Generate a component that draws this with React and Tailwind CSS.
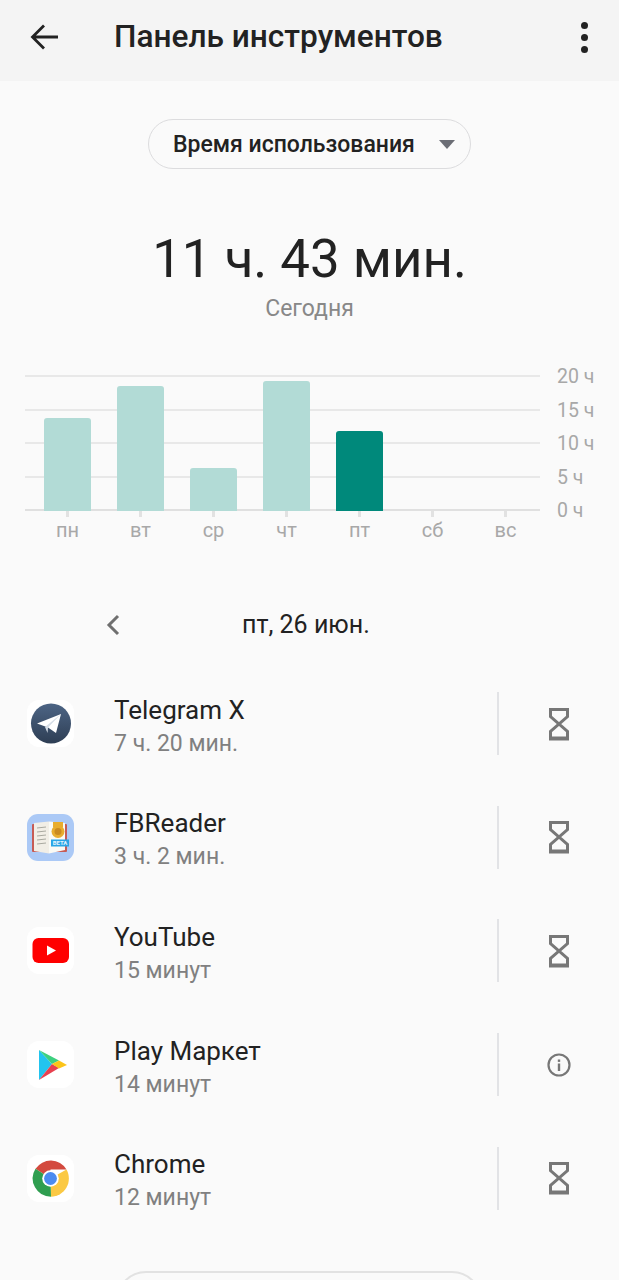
import React from "react";

const bars = [
  { day: "пн", h: 93 },
  { day: "вт", h: 125 },
  { day: "ср", h: 43 },
  { day: "чт", h: 130 },
  { day: "пт", h: 80, active: true },
  { day: "сб", h: 0 },
  { day: "вс", h: 0 },
];

const axis = ["20 ч", "15 ч", "10 ч", "5 ч", "0 ч"];

function Hourglass() {
  return (
    <svg width="22" height="34" viewBox="0 0 22 34" fill="none" stroke="#777" strokeWidth="3">
      <path d="M2.5 2.5H19.5V9.5L2.5 24.5V31.5H19.5V24.5L2.5 9.5Z" strokeLinejoin="miter" />
      <path d="M1 31.5H21" strokeWidth="4" />
    </svg>
  );
}

function InfoIcon() {
  return (
    <svg width="26" height="26" viewBox="0 0 26 26" fill="none">
      <circle cx="13" cy="13" r="10.5" stroke="#777" strokeWidth="2.2" />
      <rect x="11.8" y="11.5" width="2.4" height="7.5" fill="#777" />
      <rect x="11.8" y="7.5" width="2.4" height="2.4" fill="#777" />
    </svg>
  );
}

function TelegramIcon() {
  return (
    <svg width="47" height="47" viewBox="0 0 47 47">
      <defs>
        <linearGradient id="tg" x1="0" y1="0" x2="0" y2="1">
          <stop offset="0" stopColor="#4d6585" />
          <stop offset="1" stopColor="#2e3e54" />
        </linearGradient>
      </defs>
      <rect width="47" height="47" rx="12" fill="#fff" />
      <circle cx="24" cy="23.5" r="20" fill="url(#tg)" />
      <path d="M10 23.5L34 14L29 33L21 27.5Z" fill="#fff" />
      <path d="M18 27L34 14L21 27.5L20.5 33Z" fill="#d5dde6" />
    </svg>
  );
}

function FBReaderIcon() {
  return (
    <svg width="47" height="47" viewBox="0 0 47 47">
      <rect width="47" height="47" rx="11" fill="#abc9f6" />
      <rect x="5" y="10" width="35" height="28" rx="1" fill="#c65b55" />
      <path d="M7 9L22 7.5V39.5L7 37Z" fill="#f1eee6" />
      <path d="M22 7.5L38 9V36L22 39.5Z" fill="#fafaf5" />
      <path d="M10 14L19 13M10 18L19 17M10 22L19 21M10 26L19 25M10 30L19 29" stroke="#a9a9a0" strokeWidth="1" />
      <rect x="26" y="8" width="10" height="5" fill="#e8ad2e" />
      <circle cx="31" cy="17.5" r="6.5" fill="#e8ad2e" />
      <circle cx="31" cy="17.5" r="3.5" fill="#c98a1f" />
      <rect x="24" y="25.5" width="18" height="7" fill="#2aa5e6" />
      <text x="33" y="31.2" textAnchor="middle" fontSize="6" fontWeight="700" fill="#e3f4fd" fontFamily="Roboto, sans-serif">BETA</text>
    </svg>
  );
}

function YouTubeIcon() {
  return (
    <svg width="47" height="47" viewBox="0 0 47 47">
      <rect width="47" height="47" rx="12" fill="#fff" />
      <rect x="5.5" y="11" width="36.5" height="25" rx="6" fill="#f00" />
      <path d="M20 18.5L29 23.5L20 28.5Z" fill="#fff" />
    </svg>
  );
}

function PlayIcon() {
  return (
    <svg width="47" height="47" viewBox="0 0 47 47">
      <rect width="47" height="47" rx="12" fill="#fff" />
      <path d="M12 9L25 23L12 39Z" fill="#22c4ef" />
      <path d="M12 9L32 19.5L25 23Z" fill="#3dd07f" />
      <path d="M12 39L25 23L32 27Z" fill="#e8404f" />
      <path d="M32 19.5L40 24L32 27.5L25 23Z" fill="#fcc419" />
    </svg>
  );
}

function ChromeIcon() {
  return (
    <svg width="47" height="47" viewBox="0 0 47 47">
      <rect width="47" height="47" rx="12" fill="#fff" />
      <path d="M23.5 23.5L8.5 13.8A18.3 18.3 0 0 1 39.5 14.5H23.5Z" fill="#d34a3f" />
      <path d="M23.5 23.5L39.5 14.5A18.3 18.3 0 0 1 24 41.8Z" fill="#fbc944" />
      <path d="M23.5 23.5L24 41.8A18.3 18.3 0 0 1 8.5 13.8Z" fill="#2f9e50" />
      <circle cx="23.5" cy="23.5" r="8.3" fill="#fff" />
      <circle cx="23.5" cy="23.5" r="6.4" fill="#4c8bf0" />
    </svg>
  );
}

const apps = [
  { name: "Telegram X", time: "7 ч. 20 мин.", icon: <TelegramIcon />, action: <Hourglass /> },
  { name: "FBReader", time: "3 ч. 2 мин.", icon: <FBReaderIcon />, action: <Hourglass /> },
  { name: "YouTube", time: "15 минут", icon: <YouTubeIcon />, action: <Hourglass /> },
  { name: "Play Маркет", time: "14 минут", icon: <PlayIcon />, action: <InfoIcon /> },
  { name: "Chrome", time: "12 минут", icon: <ChromeIcon />, action: <Hourglass /> },
];

export default function App() {
  return (
    <div className="h-[1280px] w-[619px] overflow-hidden bg-[#fafafa] font-['Roboto',sans-serif]">
      {/* top bar */}
      <div className="flex h-[81px] items-center bg-[#f4f4f4] pb-[7px]">
        <div className="flex w-[114px] justify-center pr-[26px]">
          <svg width="28" height="28" viewBox="0 0 28 28" fill="none" stroke="#222" strokeWidth="2.8">
            <path d="M28 14H3M14 2.5L2.5 14L14 25.5" />
          </svg>
        </div>
        <div className="flex-1 text-[31.6px] leading-[40px] font-medium text-[#222]">Панель инструментов</div>
        <div className="mr-[31px] flex flex-col gap-[5px]">
          <span className="h-[7px] w-[7px] rounded-full bg-[#222]" />
          <span className="h-[7px] w-[7px] rounded-full bg-[#222]" />
          <span className="h-[7px] w-[7px] rounded-full bg-[#222]" />
        </div>
      </div>

      {/* dropdown */}
      <div className="mt-[38px] flex justify-center">
        <div className="flex h-[50px] w-[323px] items-center rounded-full border border-[#dcdcde] pt-[1px] pl-[24px]">
          <span className="text-[23px] leading-[30px] font-medium text-[#222]">Время использования</span>
          <span className="ml-[24px] h-0 w-0 border-x-[8px] border-t-[9px] border-x-transparent border-t-[#6b6d75]" />
        </div>
      </div>

      {/* total */}
      <div className="mt-[57px] text-center text-[52.8px] leading-[66px] text-[#222]">11 ч. 43 мин.</div>
      <div className="mt-[2px] text-center text-[23px] leading-[30px] text-[#888]">Сегодня</div>

      {/* chart */}
      <div className="mt-[51px] flex">
        <div className="relative ml-[25px] h-[136px] w-[515px]">
          <div className="flex h-full flex-col justify-between">
            <div className="h-[2px] bg-[#e8e8e8]" />
            <div className="h-[2px] bg-[#e8e8e8]" />
            <div className="h-[2px] bg-[#e8e8e8]" />
            <div className="h-[2px] bg-[#e8e8e8]" />
            <div className="h-[2px] bg-[#e0e0e0]" />
          </div>
          <div className="absolute inset-0 flex items-end pl-[19px]">
            {bars.map((b) => (
              <div key={b.day} className="mr-[26px] w-[47px] shrink-0">
                {b.h > 0 && (
                  <div
                    className={b.active ? "rounded-t-[3px] bg-[#00897b]" : "rounded-t-[3px] bg-[#b2dbd6]"}
                    style={{ height: b.h }}
                  />
                )}
              </div>
            ))}
          </div>
        </div>
        <div className="ml-[17px] flex h-[136px] flex-col justify-between">
          {axis.map((a) => (
            <div key={a} className="h-[2px] text-[19.5px] leading-[4px] whitespace-nowrap text-[#a8a8a8]">
              {a}
            </div>
          ))}
        </div>
      </div>
      <div className="ml-[44px] flex">
        {bars.map((b) => (
          <div key={b.day} className="mr-[26px] flex w-[47px] shrink-0 flex-col items-center">
            <div className="h-[6px] w-[3px] bg-[#e2e2e2]" />
            <div className="mt-[1px] text-[20px] leading-[24px] text-[#a8a8a8]">{b.day}</div>
          </div>
        ))}
      </div>

      {/* date */}
      <div className="mt-[63px] flex h-[40px] items-center">
        <div className="ml-[106px] w-[14px]">
          <svg width="14" height="22" viewBox="0 0 14 22" fill="none" stroke="#6f6f6f" strokeWidth="3">
            <path d="M12 2L3 11L12 20" />
          </svg>
        </div>
        <div className="ml-[122px] text-[25px] leading-[32px] text-[#222]">пт, 26 июн.</div>
      </div>

      {/* app list */}
      <div className="mt-[22px]">
        {apps.map((app) => (
          <div key={app.name} className="flex h-[113.6px] items-center">
            <div className="ml-[27px] h-[47px] w-[47px]">{app.icon}</div>
            <div className="mt-[5px] ml-[40px] w-[383px]">
              <div className="text-[26px] leading-[34px] text-[#222]">{app.name}</div>
              <div className="mt-[1px] text-[23px] leading-[32px] text-[#808080]">{app.time}</div>
            </div>
            <div className="h-[63px] w-[2px] bg-[#e2e3e6]" />
            <div className="flex w-[119px] justify-center">{app.action}</div>
          </div>
        ))}
      </div>

      {/* bottom button, cut off by the screen edge */}
      <div className="mt-[36px] ml-[116px] h-[60px] w-[366px] rounded-[30px] border-2 border-[#e2e2e2]" />
    </div>
  );
}
